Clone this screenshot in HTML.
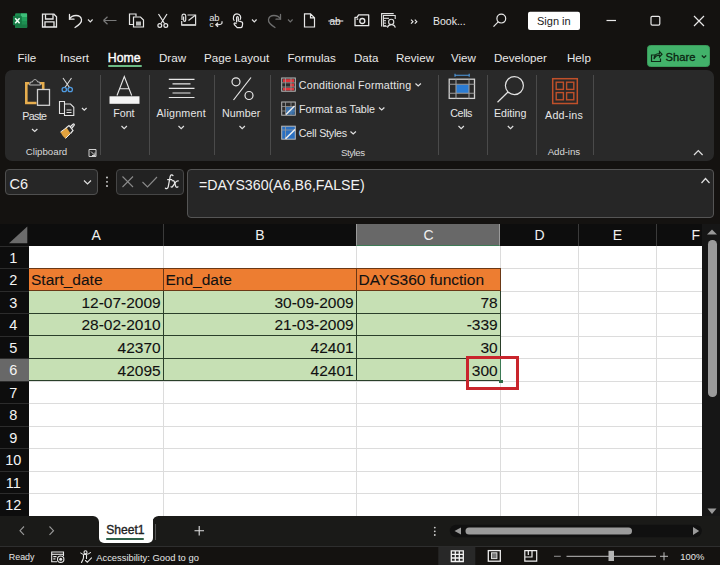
<!DOCTYPE html>
<html><head><meta charset="utf-8">
<style>
*{margin:0;padding:0;box-sizing:border-box}
html,body{width:720px;height:565px;overflow:hidden;background:#141210;font-family:"Liberation Sans",sans-serif;color:#fff}
.a{position:absolute}
.t{position:absolute;white-space:nowrap;line-height:1}
svg{position:absolute;overflow:visible}
#ribbon{left:5px;top:70px;width:709px;height:91px;background:#292929;border-radius:7px}
.sep{position:absolute;width:1px;background:#4a4a4a;top:75px;height:80px}
.tab{position:absolute;top:52px;font-size:11.6px;color:#e8e8e8;white-space:nowrap;line-height:1}
.rl{position:absolute;font-size:10.8px;color:#e6e6e6;white-space:nowrap;line-height:1}
.gl{position:absolute;font-size:10px;color:#d8d8d8;white-space:nowrap;line-height:1}
#grid{left:0;top:224px;width:702px;height:292px;background:#fff;overflow:hidden}
.ch{position:absolute;top:224px;height:21.5px;background:#0c0c0c;color:#f0f0f0;font-size:15px;text-align:center;line-height:22px}
.rh{position:absolute;left:0;width:28.5px;background:#0c0c0c;color:#f0f0f0;font-size:15px;text-align:center}
.cell{position:absolute;font-size:15.5px;color:#111;-webkit-text-stroke:0.1px #111;white-space:nowrap;line-height:22px}
</style></head><body>

<!-- title bar -->
<svg style="left:0;top:0" width="720" height="40" viewBox="0 0 720 40">
<!-- excel -->
<rect x="15" y="13.3" width="12.2" height="14.6" rx="1.3" fill="#1e8f52"/>
<rect x="21" y="13.5" width="6" height="3.5" fill="#3fbf7a"/>
<rect x="21" y="17" width="6" height="4" fill="#22a05c"/>
<rect x="15" y="24.5" width="12.2" height="3.4" fill="#197a45"/>
<rect x="12.9" y="15.8" width="8.9" height="9.4" rx="1" fill="#157a45"/>
<path d="M15.2 18.2 L19.6 23.2 M19.6 18.2 L15.2 23.2" stroke="#f2fff6" stroke-width="1.5"/>
<!-- save -->
<g fill="none" stroke="#e8e8e8" stroke-width="1.3">
<path d="M42.5 14.2 H54 L56.5 16.7 V27 H42.5 Z"/>
<path d="M45.5 14.2 V19 H53 V14.2"/>
<path d="M45 27 V21.8 H54 V27"/>
</g>
<!-- undo -->
<g fill="none" stroke="#e8e8e8" stroke-width="1.3" stroke-linecap="round">
<path d="M69.5 19 C72 14.5 80.5 14 81.5 19.5 C82 22.5 79 25 75 27.5"/>
<path d="M69.5 14.5 V19.2 H74"/>
</g>
<path d="M88 19.5 L90.3 21.8 L92.6 19.5" fill="none" stroke="#e0e0e0" stroke-width="1.2"/>
<!-- back arrow gray -->
<path d="M103.5 20.5 H116.5 M103.5 20.5 L107.5 16.8 M103.5 20.5 L107.5 24.2" fill="none" stroke="#7a7a7a" stroke-width="1.2"/>
<!-- copy doc -->
<g fill="none" stroke="#e8e8e8" stroke-width="1.2">
<path d="M136 16.5 V14 H129.5 V24.5 H133"/>
<path d="M133.5 17 H140.5 L143.5 20 V27 H133.5 Z"/>
</g>
<rect x="136" y="21.5" width="5" height="4" fill="#bbb"/>
<!-- scissors -->
<g fill="none" stroke="#e8e8e8" stroke-width="1.2">
<path d="M158.5 14 L164.5 23.5 M167 14 L161 23.5"/>
<circle cx="159.8" cy="25.5" r="1.9"/>
<circle cx="165.8" cy="25.5" r="1.9"/>
</g>
<!-- mail attach -->
<g fill="none" stroke="#e0e0e0" stroke-width="1.2">
<path d="M187.5 15 H195.6 V25 H181.7 V21"/>
<path d="M188.5 20.5 L195.3 15.3"/>
<path d="M182 20 V15.8 C182 13.5 185.7 13.5 185.7 15.8 V20 C185.7 21.8 183.6 21.8 183.6 20 V16.5"/>
</g>
<rect x="181.5" y="24.2" width="14.5" height="1.6" fill="#d0d0d0"/>
<!-- abc -->
<text x="209.3" y="20.6" font-family="Liberation Sans" font-size="9.4" fill="#e6e6e6" letter-spacing="-0.3">ab</text>
<text x="209.5" y="27.2" font-family="Liberation Sans" font-size="8" fill="#e6e6e6">c</text>
<path d="M222 21.2 V23 C222 24.6 220.5 24.8 216 24.8 M218 22.8 L215.8 24.8 L218 26.8" fill="none" stroke="#e6e6e6" stroke-width="1.2"/>
<!-- touch -->
<g fill="none" stroke="#e8e8e8" stroke-width="1.2" stroke-linejoin="round">
<path d="M234.3 20.8 C232.5 18.5 233.3 13.8 237 13.8 C240.5 13.8 241.6 17.6 240 20"/>
<path d="M236.6 22.5 V17.6 C236.6 16.3 238.3 16.3 238.3 17.6 V21 L241 21.7 C242.3 22 242.8 23 242.6 24.2 L242.2 26.5 C242 27.3 241.3 27.6 240.5 27.6 H237.2 L234.3 24.5 C233.6 23.6 234.6 22.4 235.7 23.2 L236.6 23.8"/>
</g>
<path d="M252 19.5 L254.3 21.8 L256.6 19.5" fill="none" stroke="#e0e0e0" stroke-width="1.2"/>
<!-- redo gray -->
<g fill="none" stroke="#6e6e6e" stroke-width="1.3" stroke-linecap="round">
<path d="M280.5 19 C278 14.5 269.5 14 268.5 19.5 C268 22.5 271 25 275 27.5"/>
<path d="M280.5 14.5 V19.2 H276"/>
</g>
<path d="M288 19.5 L290.3 21.8 L292.6 19.5" fill="none" stroke="#6e6e6e" stroke-width="1.2"/>
<!-- new doc -->
<path d="M304.5 13.8 H310.5 L314.5 17.8 V27 H304.5 Z M310.5 13.8 V17.8 H314.5" fill="none" stroke="#e8e8e8" stroke-width="1.2"/>
<!-- ab strike -->
<text x="329.5" y="24.5" font-family="Liberation Sans" font-size="10" fill="#e8e8e8">ab</text>
<path d="M328.3 21 H343.3" stroke="#e8e8e8" stroke-width="1.1"/>
<!-- camera -->
<g fill="none" stroke="#e8e8e8" stroke-width="1.3" stroke-linejoin="round">
<path d="M355 17.3 H357 L358.6 14.9 H368.7 V25.7 H355 Z"/>
<circle cx="362.3" cy="21" r="2.5"/>
</g>
<rect x="356.6" y="18.4" width="1.6" height="1.4" fill="#e8e8e8"/>
<!-- multi -->
<g fill="none" stroke="#e0e0e0" stroke-width="1.1">
<path d="M381.6 26.5 V13.6 H393.7"/>
<path d="M387.5 26.3 H383.4 V15.5 H395.2 V19"/>
<path d="M383.6 18.3 H389"/>
<circle cx="391.2" cy="21.9" r="2.6"/>
<path d="M387.4 27.6 C388 25.3 389.5 24.6 391.3 24.6 C393.1 24.6 394.8 25.3 395.3 27.6"/>
</g>
<g fill="#e0e0e0"><rect x="384.2" y="20" width="1.6" height="1.3"/><rect x="384.2" y="22.5" width="1.6" height="1.3"/><rect x="384.2" y="25" width="1.6" height="1.3"/></g>
<!-- >> -->
<path d="M411 19.7 L413 21.7 L411 23.7 M414.8 19.7 L416.8 21.7 L414.8 23.7" fill="none" stroke="#e8e8e8" stroke-width="1.2"/>
<!-- search -->
<g fill="none" stroke="#e8e8e8" stroke-width="1.2">
<circle cx="501.3" cy="18.6" r="4.4"/>
<path d="M498.2 21.8 L493.5 26.6"/>
</g>
<!-- sign in -->
<rect x="528" y="11.7" width="52" height="18.3" rx="2" fill="#fff"/>
<!-- window controls -->
<path d="M606.5 20.5 H616" stroke="#e8e8e8" stroke-width="1.2"/>
<rect x="651" y="16.3" width="8.8" height="8.8" rx="1.3" fill="none" stroke="#e8e8e8" stroke-width="1.2"/>
<path d="M694 16 L704 26 M704 16 L694 26" stroke="#e8e8e8" stroke-width="1.2"/>
</svg>
<div class="t" style="left:433px;top:15.5px;font-size:10.5px;color:#e8e8e8">Book...</div>
<div class="t" style="left:537px;top:16.3px;font-size:11px;color:#1a1a1a">Sign in</div>
<div class="a" style="left:646.7px;top:45px;width:63.3px;height:22px;background:#42b26a;border-radius:3.5px;border:1px solid #3a9a5a"></div>
<svg style="left:640px;top:40px" width="80" height="32" viewBox="640 40 80 32">
<g fill="none" stroke="#0f2a17" stroke-width="1.2">
<path d="M655 55 H651.5 V61.5 H660.5 V58.5"/>
<path d="M654 59 C654 55 656.5 53.5 659.5 53.5 V51.5 L662 54.2 L659.5 57 V55.2 C657.5 55.2 655.5 56 654 59 Z"/>
</g>
<path d="M701.8 55.5 L704 57.7 L706.2 55.5" fill="none" stroke="#0f2a17" stroke-width="1.2"/>
</svg>
<div class="t" style="left:665.5px;top:52px;font-size:11.2px;color:#0a2410;-webkit-text-stroke:0.3px #0a2410">Share</div>


<!-- tabs -->
<div class="tab" style="left:17.5px">File</div>
<div class="tab" style="left:60px">Insert</div>
<div class="tab" style="left:107.8px;font-size:12.3px;color:#fff;-webkit-text-stroke:0.4px #fff">Home</div>
<div class="a" style="left:108px;top:65px;width:34px;height:1.6px;background:#6dbb86;border-radius:1px"></div>
<div class="tab" style="left:159px">Draw</div>
<div class="tab" style="left:204px">Page Layout</div>
<div class="tab" style="left:287.5px">Formulas</div>
<div class="tab" style="left:354px">Data</div>
<div class="tab" style="left:396px">Review</div>
<div class="tab" style="left:451px">View</div>
<div class="tab" style="left:494px">Developer</div>
<div class="tab" style="left:567px">Help</div>

<!-- ribbon -->
<div id="ribbon" class="a"></div>
<div class="sep" style="left:99.5px"></div>
<div class="sep" style="left:148.7px"></div>
<div class="sep" style="left:214.3px"></div>
<div class="sep" style="left:270.3px"></div>
<div class="sep" style="left:437.8px"></div>
<div class="sep" style="left:486.6px"></div>
<div class="sep" style="left:536.2px"></div>
<div class="sep" style="left:593.3px"></div>

<div class="rl" style="left:22.3px;top:110.94px;font-size:10.7px;letter-spacing:-0.67px">Paste</div>
<div class="gl" style="left:25.8px;top:147.09px;font-size:9.7px;letter-spacing:0px">Clipboard</div>
<div class="rl" style="left:113.3px;top:107.94px;font-size:10.7px;letter-spacing:-0.05px">Font</div>
<div class="rl" style="left:156.5px;top:107.94px;font-size:10.7px;letter-spacing:0.21px">Alignment</div>
<div class="rl" style="left:222px;top:107.94px;font-size:10.7px;letter-spacing:0.06px">Number</div>
<div class="rl" style="left:298.8px;top:80.14px;font-size:10.7px;letter-spacing:0.23px">Conditional Formatting</div>
<div class="rl" style="left:299px;top:103.94px;font-size:10.7px;letter-spacing:-0.03px">Format as Table</div>
<div class="rl" style="left:298.8px;top:127.94px;font-size:10.7px;letter-spacing:-0.21px">Cell Styles</div>
<div class="gl" style="left:341px;top:147.79px;font-size:9.7px;letter-spacing:-0.46px">Styles</div>
<div class="rl" style="left:450.3px;top:107.94px;font-size:10.7px;letter-spacing:-0.4px">Cells</div>
<div class="rl" style="left:494px;top:107.94px;font-size:10.7px;letter-spacing:-0.04px">Editing</div>
<div class="rl" style="left:545px;top:109.69px;font-size:10.7px;letter-spacing:0.27px">Add-ins</div>
<div class="gl" style="left:547.7px;top:146.79px;font-size:9.7px;letter-spacing:-0.08px">Add-ins</div>

<!-- formula bar -->
<div class="a" style="left:5px;top:169px;width:92.5px;height:25.5px;background:#262626;border:1px solid #4f4f4f;border-radius:4px"></div>
<div class="t" style="left:9.5px;top:176.5px;font-size:14.5px;color:#f2f2f2">C6</div>
<div class="a" style="left:116px;top:169px;width:67.5px;height:25.5px;background:#222;border:1px solid #464646;border-radius:4px"></div>
<div class="a" style="left:187px;top:169px;width:527px;height:48.5px;background:#262626;border:1px solid #555;border-radius:4px"></div>
<div class="t" style="left:199px;top:178px;font-size:14.2px;color:#f2f2f2">=DAYS360(A6,B6,FALSE)</div>
<svg style="left:0;top:70px" width="720" height="92" viewBox="0 70 720 92">
<!-- paste -->
<path d="M29.5 83.2 H26.3 V103 H36.5" fill="none" stroke="#e6ad4e" stroke-width="2.6"/>
<path d="M40 83.2 H43.2 V89" fill="none" stroke="#e6ad4e" stroke-width="2.6"/>
<path d="M29.5 85 L30.5 82 H32.5 C32.8 78.8 37.2 78.8 37.5 82 H39.5 L40.5 85 Z" fill="#2a2a2a" stroke="#b8b8b8" stroke-width="1"/>
<rect x="37.5" y="89.5" width="12" height="15.8" fill="#262626" stroke="#cfcfcf" stroke-width="1.3"/>
<path d="M32 129 L34.7 131.5 L37.4 129" fill="none" stroke="#e0e0e0" stroke-width="1.2"/>
<!-- scissors -->
<path d="M63 78 L69.5 87.5 M71.5 78 L65 87.5" fill="none" stroke="#d8d8d8" stroke-width="1.1"/>
<circle cx="64.3" cy="89.5" r="2.2" fill="none" stroke="#4f9ae0" stroke-width="1.3"/>
<circle cx="70.2" cy="89.5" r="2.2" fill="none" stroke="#4f9ae0" stroke-width="1.3"/>
<!-- copy -->
<g fill="none" stroke="#e3e3e3" stroke-width="1.1">
<path d="M64.5 104 V101.5 H59.5 V113.5 H64"/>
<path d="M64.5 104 H70.5 L73.8 107.3 V115.5 H64.5 Z"/>
<path d="M66.5 110 H71.5 M66.5 112.5 H71.5"/>
</g>
<path d="M82 108 L84.3 110.2 L86.6 108" fill="none" stroke="#e0e0e0" stroke-width="1.2"/>
<!-- format painter -->
<path d="M60.5 132 L66.5 127.5 L70.5 133.5 L65.5 138.5 C63.5 137 61.5 134.5 60.5 132 Z" fill="#e3a33e"/>
<path d="M66 128 L69 125.5 L73 130.5 L70.5 133.5" fill="none" stroke="#e8e8e8" stroke-width="1.2"/>
<path d="M70 127 L73 124.2 C73.8 123.5 74.8 124.5 74.1 125.3 L71.5 128.5" fill="none" stroke="#e8e8e8" stroke-width="1.2"/>
<path d="M60.5 132 L66 128 M70.5 133.5 L65.5 138.5" fill="none" stroke="#e8e8e8" stroke-width="1"/>
<!-- dialog launcher -->
<path d="M89 149.5 H96 V156.5 H89 Z" fill="none" stroke="#cfcfcf" stroke-width="1"/>
<path d="M91 151.5 L95 155.5 M95 152.5 V155.5 H92" fill="none" stroke="#cfcfcf" stroke-width="1"/>
<!-- font A -->
<path d="M117 95.5 L124.3 76.5 L131.7 95.5 M119.7 88.7 H129" fill="none" stroke="#e8e8e8" stroke-width="1.1"/>
<rect x="109.5" y="96.3" width="30" height="7.5" fill="#f4f4f4"/>
<path d="M121.5 126 L124.2 128.6 L126.9 126" fill="none" stroke="#e0e0e0" stroke-width="1.2"/>
<!-- alignment -->
<g stroke="#e6e6e6" stroke-width="1.2">
<path d="M168.8 79.3 H194.5 M172.5 83.8 H190.5 M168.8 88.3 H194.5 M172.5 93 H190.5 M168.8 97.5 H194.5"/>
</g>
<path d="M178.5 126 L181.2 128.6 L183.9 126" fill="none" stroke="#e0e0e0" stroke-width="1.2"/>
<!-- percent -->
<g fill="none" stroke="#e8e8e8" stroke-width="1.2">
<circle cx="236" cy="81.8" r="4"/>
<circle cx="249" cy="95.5" r="4"/>
<path d="M251 77.5 L233.5 100"/>
</g>
<path d="M239.5 126 L242.2 128.6 L244.9 126" fill="none" stroke="#e0e0e0" stroke-width="1.2"/>
<!-- CF icon -->
<rect x="281.7" y="78" width="13.6" height="13.2" fill="#2c2c2c" stroke="#b9b9b9" stroke-width="1"/>
<rect x="283" y="79.2" width="11" height="3" fill="#e0343a"/>
<rect x="290" y="83.5" width="4" height="3.2" fill="#e0343a"/>
<rect x="283" y="87.8" width="11" height="2.6" fill="#e0343a"/>
<path d="M285.5 78 V91.2 M291 78 V91.2 M281.7 82.8 H295.3 M281.7 87 H295.3" stroke="#9a9a9a" stroke-width="0.8"/>
<path d="M415.5 83.5 L418.2 86 L420.9 83.5" fill="none" stroke="#e0e0e0" stroke-width="1.2"/>
<!-- FaT icon -->
<rect x="281.7" y="102" width="13.6" height="13.2" fill="#2c2c2c" stroke="#b9b9b9" stroke-width="1"/>
<path d="M285.5 102 V115 M291 102 V115 M281.7 106.5 H295.3 M281.7 111 H295.3" stroke="#9a9a9a" stroke-width="0.8"/>
<rect x="286" y="107" width="8.6" height="7.6" fill="#3d7fc4" opacity="0.8"/>
<path d="M286 114.5 L294.5 106" stroke="#f0f0f0" stroke-width="1.5"/>
<path d="M379 107.5 L381.7 110 L384.4 107.5" fill="none" stroke="#e0e0e0" stroke-width="1.2"/>
<!-- Cell styles icon -->
<rect x="281.7" y="126.2" width="13.6" height="13" fill="#2a6fc0" stroke="#b9b9b9" stroke-width="1"/>
<path d="M285.5 126.2 V139 M281.7 130 H295.3" stroke="#9a9a9a" stroke-width="0.8"/>
<path d="M285.5 138.7 L295 129.5" stroke="#f0f0f0" stroke-width="1.6"/>
<path d="M350.5 131.5 L353.2 134 L355.9 131.5" fill="none" stroke="#e0e0e0" stroke-width="1.2"/>
<!-- cells icon -->
<path d="M455 75.3 H469.2 M455 73.8 V76.8 M469.2 73.8 V76.8" stroke="#4f9ae0" stroke-width="1.1"/>
<rect x="456" y="84.5" width="13" height="8.5" fill="#2b7cd3"/>
<rect x="449.2" y="79.2" width="25.3" height="19.2" fill="none" stroke="#cfcfcf" stroke-width="1.3"/>
<path d="M456 79.2 V98.4 M469 79.2 V98.4 M449.2 84.2 H474.5 M449.2 93.3 H474.5" stroke="#9c9c9c" stroke-width="1.1"/>
<path d="M458.5 126 L461.2 128.6 L463.9 126" fill="none" stroke="#e0e0e0" stroke-width="1.2"/>
<!-- editing search -->
<circle cx="514.4" cy="85.6" r="9" fill="none" stroke="#e3e3e3" stroke-width="1.2"/>
<path d="M508 92 L497.5 102.3" stroke="#e3e3e3" stroke-width="1.2"/>
<path d="M507.8 126 L510.5 128.6 L513.2 126" fill="none" stroke="#e0e0e0" stroke-width="1.2"/>
<!-- add-ins -->
<rect x="552.7" y="78.7" width="24.6" height="24.8" fill="none" stroke="#c0502a" stroke-width="1.5"/>
<g fill="none" stroke="#c0502a" stroke-width="1.4">
<rect x="556.2" y="82.2" width="7.2" height="7.2"/>
<rect x="566.6" y="82.2" width="7.2" height="7.2"/>
<rect x="556.2" y="92.6" width="7.2" height="7.2"/>
<rect x="566.6" y="92.6" width="7.2" height="7.2"/>
</g>
<!-- collapse -->
<path d="M694 155 L698.3 150.5 L702.6 155" fill="none" stroke="#e0e0e0" stroke-width="1.2"/>
</svg>
<!-- formula bar icons -->
<svg style="left:0;top:160px" width="720" height="64" viewBox="0 160 720 64">
<path d="M84 180.5 L87.5 184 L91 180.5" fill="none" stroke="#e0e0e0" stroke-width="1.2"/>
<circle cx="107" cy="177.5" r="0.9" fill="#e0e0e0"/><circle cx="107" cy="181.8" r="0.9" fill="#e0e0e0"/><circle cx="107" cy="186" r="0.9" fill="#e0e0e0"/>
<path d="M122.5 176.5 L133 187 M133 176.5 L122.5 187" stroke="#8a8a8a" stroke-width="1.1"/>
<path d="M142.5 182 L147.5 187 L157 177" fill="none" stroke="#8a8a8a" stroke-width="1.1"/>
<path d="M701.5 183 L705.5 178.5 L709.5 183" fill="none" stroke="#e0e0e0" stroke-width="1.2"/>
</svg>
<svg style="left:160px;top:170px" width="24" height="24" viewBox="160 170 24 24">
<g fill="none" stroke="#e8e8e8" stroke-width="1.25" stroke-linecap="round">
<path d="M173 175.6 C172.3 174.6 170.6 174.7 170.2 176.3 L168.2 186.8 C167.9 188.5 166.5 189 165.4 188.2"/>
<path d="M167.6 179.6 H171.8"/>
<path d="M172.2 180.8 C173.4 180.2 174 180.8 174.4 182 L175.6 186 C176 187.4 177 187.6 178 186.8"/>
<path d="M178.2 180.8 C177.2 180.6 176.4 181.2 175.4 182.4 L173.4 185.4 C172.6 186.8 171.8 187.4 171 186.8"/>
</g>
</svg>


<!-- grid -->
<div class="a" style="left:28.5px;top:245.5px;width:673.5px;height:271.0px;background:#fff"></div>
<div class="a" style="left:0;top:224px;width:702px;height:21.5px;background:#0d0d0d"></div>
<svg style="left:0;top:224px" width="28" height="22"><path d="M27.3 2.5 L27.3 19.3 L9 19.3 Z" fill="#6b6b6b"/></svg>
<div class="a" style="left:356px;top:224px;width:144px;height:21.5px;background:#686868;border-left:1px solid #9a9a9a;border-right:1px solid #9a9a9a;border-bottom:1.5px solid #3f7a56"></div>
<div class="a" style="left:163px;top:224px;width:1px;height:21.5px;background:#3a3a3a"></div>
<div class="a" style="left:578px;top:224px;width:1px;height:21.5px;background:#3a3a3a"></div>
<div class="a" style="left:656px;top:224px;width:1px;height:21.5px;background:#3a3a3a"></div>
<div class="t" style="left:76.25px;width:40px;text-align:center;top:228px;font-size:14px;color:#f0f0f0">A</div>
<div class="t" style="left:240.0px;width:40px;text-align:center;top:228px;font-size:14px;color:#f0f0f0">B</div>
<div class="t" style="left:408.5px;width:40px;text-align:center;top:228px;font-size:14px;color:#f0f0f0">C</div>
<div class="t" style="left:519.5px;width:40px;text-align:center;top:228px;font-size:14px;color:#f0f0f0">D</div>
<div class="t" style="left:597.5px;width:40px;text-align:center;top:228px;font-size:14px;color:#f0f0f0">E</div>
<div class="t" style="left:691.5px;top:228px;font-size:14px;color:#f0f0f0">F</div>
<div class="a" style="left:0;top:245.5px;width:28.5px;height:22.54px;background:#0d0d0d;border-top:1px solid #2c2c2c"></div>
<div class="t" style="left:0;width:26.5px;text-align:center;top:250.5px;font-size:14.5px;color:#f4f4f4">1</div>
<div class="a" style="left:0;top:268.04px;width:28.5px;height:22.54px;background:#0d0d0d;border-top:1px solid #2c2c2c"></div>
<div class="t" style="left:0;width:26.5px;text-align:center;top:273.04px;font-size:14.5px;color:#f4f4f4">2</div>
<div class="a" style="left:0;top:290.58px;width:28.5px;height:22.54px;background:#0d0d0d;border-top:1px solid #2c2c2c"></div>
<div class="t" style="left:0;width:26.5px;text-align:center;top:295.58px;font-size:14.5px;color:#f4f4f4">3</div>
<div class="a" style="left:0;top:313.12px;width:28.5px;height:22.54px;background:#0d0d0d;border-top:1px solid #2c2c2c"></div>
<div class="t" style="left:0;width:26.5px;text-align:center;top:318.12px;font-size:14.5px;color:#f4f4f4">4</div>
<div class="a" style="left:0;top:335.65999999999997px;width:28.5px;height:22.54px;background:#0d0d0d;border-top:1px solid #2c2c2c"></div>
<div class="t" style="left:0;width:26.5px;text-align:center;top:340.65999999999997px;font-size:14.5px;color:#f4f4f4">5</div>
<div class="a" style="left:0;top:358.2px;width:28.5px;height:22.54px;background:#686868;border-top:1px solid #2c2c2c"></div>
<div class="t" style="left:0;width:26.5px;text-align:center;top:363.2px;font-size:14.5px;color:#f4f4f4">6</div>
<div class="a" style="left:0;top:380.74px;width:28.5px;height:22.54px;background:#0d0d0d;border-top:1px solid #2c2c2c"></div>
<div class="t" style="left:0;width:26.5px;text-align:center;top:385.74px;font-size:14.5px;color:#f4f4f4">7</div>
<div class="a" style="left:0;top:403.28px;width:28.5px;height:22.54px;background:#0d0d0d;border-top:1px solid #2c2c2c"></div>
<div class="t" style="left:0;width:26.5px;text-align:center;top:408.28px;font-size:14.5px;color:#f4f4f4">8</div>
<div class="a" style="left:0;top:425.82px;width:28.5px;height:22.54px;background:#0d0d0d;border-top:1px solid #2c2c2c"></div>
<div class="t" style="left:0;width:26.5px;text-align:center;top:430.82px;font-size:14.5px;color:#f4f4f4">9</div>
<div class="a" style="left:0;top:448.36px;width:28.5px;height:22.54px;background:#0d0d0d;border-top:1px solid #2c2c2c"></div>
<div class="t" style="left:0;width:26.5px;text-align:center;top:453.36px;font-size:14.5px;color:#f4f4f4">10</div>
<div class="a" style="left:0;top:470.9px;width:28.5px;height:22.54px;background:#0d0d0d;border-top:1px solid #2c2c2c"></div>
<div class="t" style="left:0;width:26.5px;text-align:center;top:475.9px;font-size:14.5px;color:#f4f4f4">11</div>
<div class="a" style="left:0;top:493.44px;width:28.5px;height:22.54px;background:#0d0d0d;border-top:1px solid #2c2c2c"></div>
<div class="t" style="left:0;width:26.5px;text-align:center;top:498.44px;font-size:14.5px;color:#f4f4f4">12</div>
<div class="a" style="left:28.5px;top:268.04px;width:674px;height:1px;background:#dcdcdc"></div>
<div class="a" style="left:28.5px;top:290.58px;width:674px;height:1px;background:#dcdcdc"></div>
<div class="a" style="left:28.5px;top:313.12px;width:674px;height:1px;background:#dcdcdc"></div>
<div class="a" style="left:28.5px;top:335.65999999999997px;width:674px;height:1px;background:#dcdcdc"></div>
<div class="a" style="left:28.5px;top:358.2px;width:674px;height:1px;background:#dcdcdc"></div>
<div class="a" style="left:28.5px;top:380.74px;width:674px;height:1px;background:#dcdcdc"></div>
<div class="a" style="left:28.5px;top:403.28px;width:674px;height:1px;background:#dcdcdc"></div>
<div class="a" style="left:28.5px;top:425.82px;width:674px;height:1px;background:#dcdcdc"></div>
<div class="a" style="left:28.5px;top:448.36px;width:674px;height:1px;background:#dcdcdc"></div>
<div class="a" style="left:28.5px;top:470.9px;width:674px;height:1px;background:#dcdcdc"></div>
<div class="a" style="left:28.5px;top:493.44px;width:674px;height:1px;background:#dcdcdc"></div>
<div class="a" style="left:28.5px;top:515.98px;width:674px;height:1px;background:#dcdcdc"></div>
<div class="a" style="left:163px;top:245.5px;width:1px;height:271.0px;background:#dcdcdc"></div>
<div class="a" style="left:356px;top:245.5px;width:1px;height:271.0px;background:#dcdcdc"></div>
<div class="a" style="left:500px;top:245.5px;width:1px;height:271.0px;background:#dcdcdc"></div>
<div class="a" style="left:578px;top:245.5px;width:1px;height:271.0px;background:#dcdcdc"></div>
<div class="a" style="left:656px;top:245.5px;width:1px;height:271.0px;background:#dcdcdc"></div>
<div class="a" style="left:28.5px;top:268.04px;width:471.5px;height:22.539999999999964px;background:#ed7d31"></div>
<div class="a" style="left:28.5px;top:290.58px;width:471.5px;height:90.16000000000003px;background:#c6e0b4"></div>
<div class="a" style="left:28.5px;top:267.54px;width:472.5px;height:1px;background:#6a3816"></div>
<div class="a" style="left:28.5px;top:290.08px;width:472.5px;height:1px;background:#6a3816"></div>
<div class="a" style="left:28.5px;top:312.62px;width:472.5px;height:1px;background:#2a3f2a"></div>
<div class="a" style="left:28.5px;top:335.15999999999997px;width:472.5px;height:1px;background:#2a3f2a"></div>
<div class="a" style="left:28.5px;top:357.7px;width:472.5px;height:1px;background:#2a3f2a"></div>
<div class="a" style="left:28.5px;top:380.24px;width:472.5px;height:1px;background:#2a3f2a"></div>
<div class="a" style="left:163px;top:268.04px;width:1px;height:22.539999999999964px;background:#6a3816"></div>
<div class="a" style="left:163px;top:290.58px;width:1px;height:90.16000000000003px;background:#2a3f2a"></div>
<div class="a" style="left:356px;top:268.04px;width:1px;height:22.539999999999964px;background:#6a3816"></div>
<div class="a" style="left:356px;top:290.58px;width:1px;height:90.16000000000003px;background:#2a3f2a"></div>
<div class="a" style="left:500px;top:268.04px;width:1px;height:22.539999999999964px;background:#6a3816"></div>
<div class="a" style="left:500px;top:290.58px;width:1px;height:90.16000000000003px;background:#2a3f2a"></div>
<div class="cell" style="left:31.0px;top:269.04px">Start_date</div>
<div class="cell" style="left:165.5px;top:269.04px">End_date</div>
<div class="cell" style="left:358.5px;top:269.04px">DAYS360 function</div>
<div class="cell" style="left:-137px;width:297.7px;text-align:right;top:291.88px">12-07-2009</div>
<div class="cell" style="left:56px;width:297.7px;text-align:right;top:291.88px">30-09-2009</div>
<div class="cell" style="left:200px;width:297.7px;text-align:right;top:291.88px">78</div>
<div class="cell" style="left:-137px;width:297.7px;text-align:right;top:314.42px">28-02-2010</div>
<div class="cell" style="left:56px;width:297.7px;text-align:right;top:314.42px">21-03-2009</div>
<div class="cell" style="left:200px;width:297.7px;text-align:right;top:314.42px">-339</div>
<div class="cell" style="left:-137px;width:297.7px;text-align:right;top:336.96px">42370</div>
<div class="cell" style="left:56px;width:297.7px;text-align:right;top:336.96px">42401</div>
<div class="cell" style="left:200px;width:297.7px;text-align:right;top:336.96px">30</div>
<div class="cell" style="left:-137px;width:297.7px;text-align:right;top:359.5px">42095</div>
<div class="cell" style="left:56px;width:297.7px;text-align:right;top:359.5px">42401</div>
<div class="cell" style="left:200px;width:297.7px;text-align:right;top:359.5px">300</div>
<div class="a" style="left:499.5px;top:358.2px;width:1.5px;height:22.54px;background:#3d7a55"></div>
<div class="a" style="left:499px;top:379.5px;width:3.5px;height:3.5px;background:#2f6b47"></div>
<div class="a" style="left:466px;top:356px;width:52.5px;height:34px;border:3px solid #c9252c"></div>
<div class="a" style="left:702px;top:224px;width:18px;height:293px;background:#161616"></div>
<svg style="left:707px;top:229px" width="11" height="7"><path d="M5 0.5 L10 5.5 L0 5.5 Z" fill="#9a9a9a"/></svg>
<div class="a" style="left:708px;top:240px;width:8.5px;height:157px;background:#9a9a9a;border-radius:4.25px"></div>
<svg style="left:707px;top:507.5px" width="11" height="7"><path d="M0.5 0.5 L9.5 0.5 L5 6 Z" fill="#9a9a9a"/></svg>

<!-- sheet bar -->
<div class="a" style="left:0;top:516px;width:720px;height:30px;background:#1a1a18"></div>
<!-- status -->
<div class="a" style="left:0;top:546px;width:720px;height:19px;background:#141210;border-top:1px solid #2e2e2e"></div>
<!-- sheet tab -->
<div class="a" style="left:99px;top:516px;width:53.5px;height:26.5px;background:#fff;border-radius:0 0 5px 5px"></div>
<svg style="left:93px;top:516px" width="66" height="8" viewBox="0 0 66 8">
<path d="M0 0 H6 V6 A6 6 0 0 0 0 0 Z" fill="#fff"/>
<path d="M66 0 H59.5 V6 A6 6 0 0 1 66 0 Z" fill="#fff"/>
</svg>
<div class="t" style="left:106.2px;top:523.8px;font-size:12.1px;color:#222;-webkit-text-stroke:0.35px #222">Sheet1</div>
<div class="a" style="left:106.2px;top:538px;width:38px;height:1.8px;background:#2d6148;border-radius:1px"></div>
<div class="a" style="left:155px;top:523.5px;width:1px;height:16px;background:#555"></div>
<svg style="left:0;top:516px" width="720" height="49" viewBox="0 516 720 49">
<path d="M24 526.5 L20 530.7 L24 534.8" fill="none" stroke="#9a9a9a" stroke-width="1.1"/>
<path d="M49.5 526.5 L53.5 530.7 L49.5 534.8" fill="none" stroke="#9a9a9a" stroke-width="1.1"/>
<path d="M194.5 530.8 H204 M199.2 526 V535.6" stroke="#e0e0e0" stroke-width="1.1"/>
<circle cx="434.8" cy="527.6" r="0.9" fill="#d0d0d0"/><circle cx="434.8" cy="531.3" r="0.9" fill="#d0d0d0"/><circle cx="434.8" cy="535" r="0.9" fill="#d0d0d0"/>
<rect x="449.8" y="524.8" width="252" height="12.4" rx="6.2" fill="#101010"/>
<path d="M461 527.5 V534.5 L454.5 531 Z" fill="#9a9a9a"/>
<rect x="465.5" y="527.5" width="166.5" height="7" rx="3.5" fill="#9b9b9b"/>
<path d="M693 527 V535 L699.2 531 Z" fill="#9a9a9a"/>
<!-- status -->
<rect x="438.3" y="546.5" width="37" height="18.5" fill="#282828"/>
<path d="M451.3 550.8 H463.3 V561.5 H451.3 Z M455.3 550.8 V561.5 M459.3 550.8 V561.5 M451.3 554.4 H463.3 M451.3 558 H463.3" fill="none" stroke="#f2f2f2" stroke-width="1.3"/>
<rect x="488.3" y="550.6" width="12" height="10.6" fill="none" stroke="#eee" stroke-width="1.3"/>
<rect x="491.5" y="552.8" width="5.4" height="5.8" fill="#777" stroke="#ddd" stroke-width="1"/>
<path d="M524.8 550.6 H536.7 V561.2 H524.8 Z M532 550.6 V557 H524.8 M528.3 550.6 V555" fill="none" stroke="#eee" stroke-width="1.2"/>
<path d="M554 556.3 H560.8" stroke="#888" stroke-width="1.1"/>
<path d="M566.5 556.3 H656" stroke="#bdbdbd" stroke-width="1"/>
<rect x="608.5" y="550.8" width="5.5" height="10.2" fill="#b5b5b5"/>
<path d="M660 556.3 H668 M664 552.3 V560.3" stroke="#bdbdbd" stroke-width="1"/>
<!-- macro icon -->
<g fill="none" stroke="#e8e8e8" stroke-width="1.1">
<path d="M57 561.7 H51.7 V552 H63.5 V556"/>
<path d="M51.7 554.3 H63.5"/>
<circle cx="60.7" cy="559.2" r="3.2"/>
</g>
<circle cx="60.7" cy="559.2" r="1.5" fill="#e8e8e8"/>
<rect x="53.3" y="556" width="3.2" height="1.2" fill="#e8e8e8"/>
<rect x="53.3" y="558.3" width="2.2" height="1.2" fill="#e8e8e8"/>
<!-- accessibility -->
<g fill="none" stroke="#e8e8e8" stroke-width="1.1" stroke-linecap="round">
<circle cx="85.5" cy="552.3" r="1.5"/>
<path d="M80.8 553 C82.5 555 88.5 555 90.5 552.5"/>
<path d="M83.5 555 V557.5 C83.5 559.5 82 561 81.5 562.5"/>
<path d="M86.5 555 V558.5"/>
<path d="M85.5 560.5 L87.3 562.3 L91.5 557.8"/>
</g>
</svg>
<div class="t" style="left:8.8px;top:552.7px;font-size:8.9px;color:#e6e6e6">Ready</div>
<div class="t" style="left:96.2px;top:552.7px;font-size:9.4px;color:#e6e6e6">Accessibility: Good to go</div>
<div class="t" style="left:680.3px;top:552.3px;font-size:9.4px;color:#e6e6e6">100%</div>

</body></html>
